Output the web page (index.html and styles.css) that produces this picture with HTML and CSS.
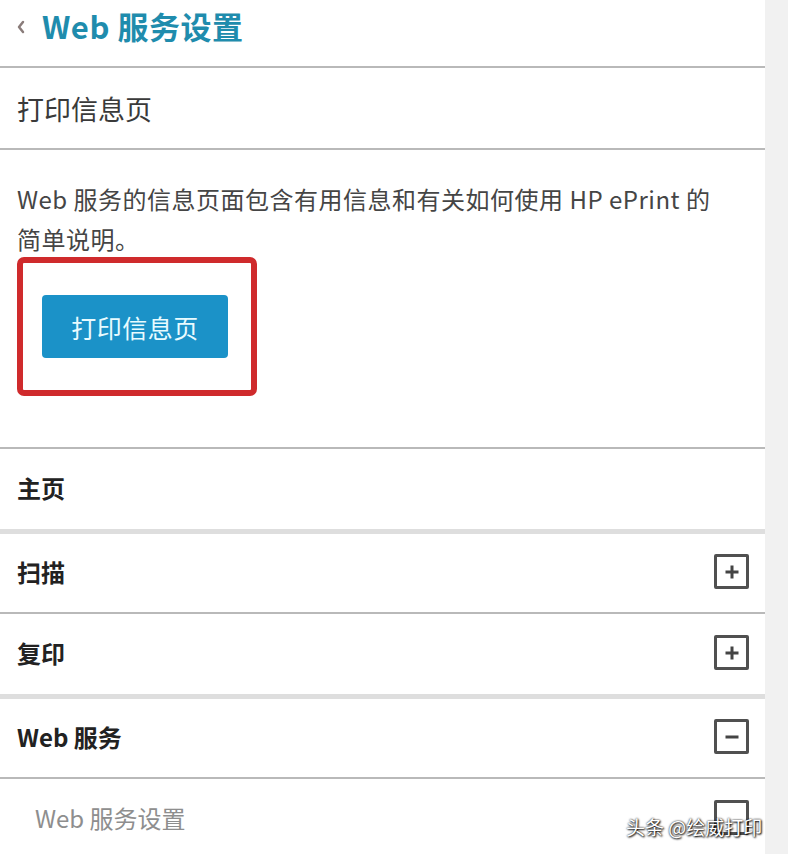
FILE: index.html
```html
<!DOCTYPE html>
<html lang="zh-CN">
<head>
  <meta charset="UTF-8" />
  <meta name="viewport" content="width=device-width, initial-scale=1.0"/>
  <title>Web 服务设置</title>
  <link rel="stylesheet" href="styles.css">
</head>
<body>
  <div class="page">
    <!-- CABECERA -->
    <header class="header">
      <svg class="back" width="10" height="14" viewBox="0 0 10 14">
        <polyline points="7,2 3,7 7,12" fill="none" stroke="#8a7c7a" stroke-width="2.5" stroke-linecap="round" stroke-linejoin="round"/>
      </svg>
      <h1 class="title">Web 服务设置</h1>
    </header>

    <div class="section-title">打印信息页</div>

    <!-- DESCRIPCIÓN + BOTÓN -->
    <div class="info">
      <p class="desc">Web 服务的信息页面包含有用信息和有关如何使用 HP ePrint 的<br>简单说明。</p>
      <div class="highlight">
        <button class="btn">打印信息页</button>
      </div>
    </div>

    <!-- MENÚ -->
    <div class="group">
      <div class="row"><span class="label">主页</span></div>
    </div>
    <div class="group">
      <div class="row lined">
        <span class="label">扫描</span>
        <span class="toggle plus"></span>
      </div>
      <div class="row">
        <span class="label">复印</span>
        <span class="toggle plus"></span>
      </div>
    </div>
    <div class="group">
      <div class="row lined">
        <span class="label">Web 服务</span>
        <span class="toggle minus"></span>
      </div>
      <div class="row sub">
        <span class="label">Web 服务设置</span>
        <span class="toggle"></span>
      </div>
    </div>
  </div>

  <!-- marca de agua -->
  <div class="watermark">头条 @绘威打印</div>
</body>
</html>
```

FILE: styles.css
```css
/* reseteo */
* {
  margin: 0;
  padding: 0;
  box-sizing: border-box;
}

body {
  background: #f1f1f1;
  font-family: "Noto Sans CJK SC", "Noto Sans", sans-serif;
  color: #333;
  height: 854px;
  overflow: hidden;
  position: relative;
}

/* columna blanca principal */
.page {
  width: 765px;
  min-height: 854px;
  background: #dedede;
}

/* cabecera */
.header {
  display: flex;
  align-items: center;
  gap: 16px;
  height: 68px;
  padding: 0 0 16px 16px;
  background: #fff;
  border-bottom: 2px solid #b9b9b9;
}

.back {
  margin-top: 4px;
}

.title {
  font-size: 31px;
  font-weight: 700;
  color: #1f8cad;
  line-height: 1;
  letter-spacing: 0.5px;
}

.section-title {
  display: flex;
  align-items: center;
  height: 82px;
  padding-left: 17px;
  font-size: 27px;
  color: #3a3a3a;
  background: #fff;
  border-bottom: 2px solid #b9b9b9;
}

/* descripción */
.info {
  background: #fff;
  padding: 29px 17px 51px;
  border-bottom: 2px solid #b9b9b9;
}

.desc {
  font-size: 24px;
  line-height: 40px;
  color: #454545;
  letter-spacing: 0.5px;
}

/* recuadro rojo */
.highlight {
  display: inline-block;
  margin-top: -2px;
  padding: 32px 23px 32px 19px;
  border: 6px solid #cf2a2c;
  border-radius: 7px;
}

.btn {
  display: block;
  width: 186px;
  height: 63px;
  border: none;
  border-radius: 4px;
  background: #1b92c8;
  color: #e8fbff;
  font-family: inherit;
  font-size: 25px;
  letter-spacing: 0.5px;
}

/* grupos del menú */
.group {
  background: #fff;
  margin-bottom: 5px;
}

.row {
  display: flex;
  align-items: center;
  justify-content: space-between;
  height: 80px;
  padding: 0 16px 3px 17px;
}

.row.lined {
  border-bottom: 2px solid #b9b9b9;
}

.label {
  font-size: 24px;
  font-weight: 700;
  color: #222;
}

.sub .label {
  padding-left: 18px;
  font-weight: 400;
  color: #8e8e8e;
}

/* cajas + / − */
.toggle {
  position: relative;
  width: 35px;
  height: 35px;
  border: 3px solid #505050;
  border-radius: 2px;
}

.toggle.plus::before,
.toggle.plus::after,
.toggle.minus::before {
  content: "";
  position: absolute;
  left: 50%;
  top: 50%;
  width: 13px;
  height: 3px;
  background: #444;
  transform: translate(-50%, -50%);
}

.toggle.plus::after {
  width: 3px;
  height: 13px;
}

/* marca de agua */
.watermark {
  position: absolute;
  left: 626px;
  top: 813px;
  font-size: 19px;
  color: #fff;
  text-shadow: 0 0 2px #000, 1px 1px 2px #000;
}
```
